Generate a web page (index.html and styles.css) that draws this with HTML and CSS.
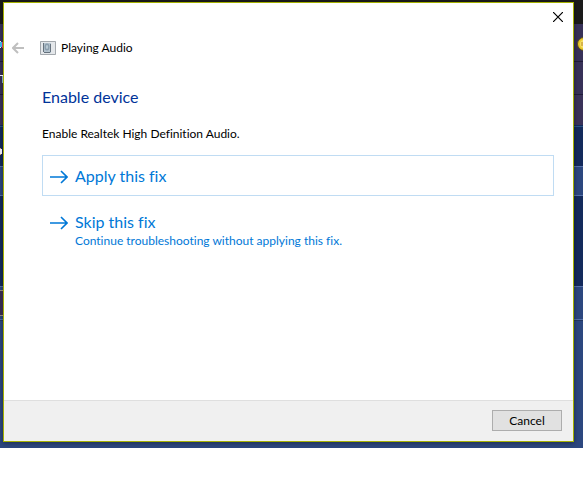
FILE: index.html
```html
<!DOCTYPE html>
<html lang="en">
<head>
<meta charset="utf-8">
<title>Playing Audio</title>
<link rel="stylesheet" href="styles.css">
</head>
<body>
<div class="desktop">
  <svg class="scrap-left" width="3" height="320" viewBox="0 0 3 320" aria-hidden="true">
    <path fill="#e8e4f0" d="M0 41h1v7H0zM0 75h3v1H0zM0 149h2v5H0z"/>
    <path fill="#36b3e8" d="M0 42h2v5H0z"/>
    <path fill="#c9355e" d="M2 42h1v6H2z"/>
    <path fill="#7fa0b8" d="M2 76h1v7H2z"/>
    <path fill="#d29a62" d="M0 148h1v1H0zM0 154h1v1H0z"/>
    <path fill="#35294c" d="M0 291h3v24H0z"/>
    <path fill="#8d8178" d="M0 290h3v1H0zM0 315h3v1H0z"/>
  </svg>
  <svg class="coin" width="6" height="14" viewBox="0 0 6 14" aria-hidden="true">
    <circle cx="7" cy="7" r="6.5" fill="#e9c92e" stroke="#594c1c"/>
    <circle cx="7" cy="7" r="4" fill="#f5e06a"/>
    <path d="M5 5v4" stroke="#b9862a"/>
  </svg>
  <main class="window">
    <div class="titlebar">
      <button class="close" type="button" aria-label="Close">
        <svg width="10" height="10" viewBox="0 0 10 10" aria-hidden="true"><path d="M0 0l10 10M10 0L0 10" stroke="#000" stroke-width="1.2"/></svg>
      </button>
    </div>
    <header class="header">
      <button class="back" type="button" aria-label="Back" disabled>
        <svg width="12" height="12" viewBox="0 0 12 12" aria-hidden="true"><path d="M12 6H1M6 1L1 6l5 5" fill="none" stroke="#bfbfbf" stroke-width="2"/></svg>
      </button>
      <svg class="app-icon" width="16" height="14" viewBox="0 0 16 14" aria-hidden="true">
        <path fill="#e4e7ea" d="M0 0h16v14H0z"/>
        <path fill="none" stroke="#a3a8ad" d="M.5 .5h15v13H.5z"/>
        <path fill="#b4c3ce" d="M4 2h7v10H4z"/>
        <path fill="none" stroke="#66727d" d="M3.500 2v9M4 11.500h6M10.500 3v8"/>
        <ellipse cx="7" cy="6" rx="2.500" ry="3.500" fill="#8a9dac"/>
        <ellipse cx="7" cy="6" rx="1.200" ry="2" fill="#b9c9d3"/>
      </svg>
      <span>Playing Audio</span>
    </header>
    <section class="content">
      <h1>Enable device</h1>
      <p>Enable Realtek High Definition Audio.</p>
      <button class="command focused" type="button">
        <svg class="arrow" width="18" height="14" viewBox="0 0 18 14" aria-hidden="true"><path d="M0 7h17M11 1l6 6-6 6" fill="none" stroke="#0078d7" stroke-width="1.600"/></svg>
        <span class="label"><span class="name">Apply this fix</span></span>
      </button>
      <button class="command" type="button">
        <svg class="arrow" width="18" height="14" viewBox="0 0 18 14" aria-hidden="true"><path d="M0 7h17M11 1l6 6-6 6" fill="none" stroke="#0078d7" stroke-width="1.600"/></svg>
        <span class="label"><span class="name">Skip this fix</span><span class="note">Continue troubleshooting without applying this fix.</span></span>
      </button>
    </section>
    <footer class="footer">
      <button class="cancel" type="button">Cancel</button>
    </footer>
  </main>
</div>
</body>
</html>
```
FILE: styles.css
```css
* { box-sizing: border-box; }
body {
  margin: 0;
  background: #fff;
  color: #000;
  font: 12px/17px Lato, "Open Sans", sans-serif;
  font-variant-ligatures: none;
}
button {
  margin: 0;
  padding: 0;
  border: 0;
  background: none;
  color: inherit;
  font: inherit;
  font-variant-ligatures: none;
}
svg { display: block; flex: none; }
.desktop {
  position: relative;
  padding: 2px 9px 6px 3px;
  background: linear-gradient(
    #1a1a1a 24px, #373158 24px 61px, #201c3a 61px 62px,
    #373158 62px 94px, #201c3a 94px 95px, #3a3259 95px 125px,
    #132a5c 125px 126px, #2c5384 126px 127px, #132a5c 127px 166px,
    #5570a8 166px 167px, #2c477f 167px 195px, #5570a8 195px 196px,
    #132a5c 196px 286px, #5570a8 286px 287px, #2c477f 287px 319px,
    #5570a8 319px 320px, #223763 320px 321px, #2c477f 321px);
}
.scrap-left { position: absolute; left: 0; top: 0; }
.coin { position: absolute; right: 0; top: 37px; }
.window {
  display: flex;
  flex-direction: column;
  border: 1px solid #a4b000;
  background: #fff;
  box-shadow: 0 1px 5px rgba(0, 0, 0, .4);
}
.titlebar {
  display: flex;
  justify-content: flex-end;
  padding: 9px 10px 0;
}
.header {
  display: flex;
  align-items: center;
  gap: 5px;
  padding: 17px 8px 0;
}
.back { margin-right: 11px; }
.content {
  flex: 1;
  padding: 31px 19px 141px 38px;
}
h1 {
  margin: 0 0 18px;
  color: #003399;
  font-size: 16px;
  font-weight: 400;
  line-height: 20px;
}
p { margin: 0 0 13px; }
.command {
  display: flex;
  gap: 7px;
  width: 100%;
  padding: 10px 7px 9px;
  border: 1px solid transparent;
  color: #0078d7;
  text-align: left;
}
.command + .command { margin-top: 5px; }
.focused { border-color: #c0dcf3; }
.arrow { margin-top: 4px; }
.label, .name, .note { display: block; }
.name { font-size: 16px; line-height: 20px; }
.footer {
  display: flex;
  justify-content: flex-end;
  padding: 9px 11px 10px;
  border-top: 1px solid #dfdfdf;
  background: #f0f0f0;
}
.cancel {
  min-width: 70px;
  padding: 1px 12px;
  border: 1px solid #adadad;
  background: #e1e1e1;
}
```
